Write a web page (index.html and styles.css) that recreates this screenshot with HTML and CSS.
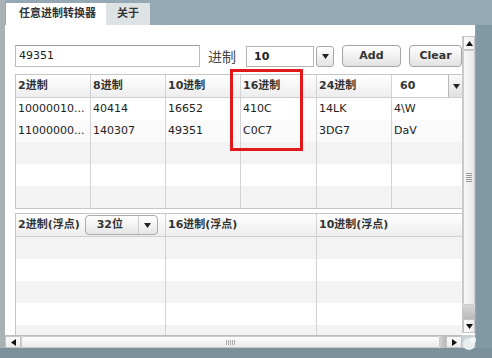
FILE: index.html
```
<!DOCTYPE html>
<html>
<head>
<meta charset="utf-8">
<title>任意进制转换器</title>
<link rel="stylesheet" href="styles.css">
</head>
<body>
<div class="window">

<div class="tabbar">
  <div class="tab tab-on">任意进制转换器</div>
  <div class="tab">关于</div>
</div>

<div class="middle">
  <div class="panel">
    <div class="pane">

      <div class="toolbar">
        <div class="field">49351</div>
        <span class="label">进制</span>
        <div class="combo">
          <div class="combo-box">10</div>
          <div class="combo-btn"><svg width="7" height="5" viewBox="0 0 7 5"><polygon points="0,0 7,0 3.5,5" fill="#222"/></svg></div>
        </div>
        <div class="btn">Add</div>
        <div class="btn btn-clear">Clear</div>
      </div>

      <div class="tbl tbl-int">
        <div class="tr th">
          <div class="td">2进制</div>
          <div class="td">8进制</div>
          <div class="td">10进制</div>
          <div class="td">16进制</div>
          <div class="td">24进制</div>
          <div class="td td-pick">
            <div class="pick-box">60</div>
            <div class="pick-btn"><svg width="7" height="5" viewBox="0 0 7 5"><polygon points="0,0 7,0 3.5,5" fill="#222"/></svg></div>
          </div>
        </div>
        <div class="tr r-white">
          <div class="td">10000010...</div>
          <div class="td">40414</div>
          <div class="td">16652</div>
          <div class="td">410C</div>
          <div class="td">14LK</div>
          <div class="td">4\W</div>
        </div>
        <div class="tr r-faint">
          <div class="td">11000000...</div>
          <div class="td">140307</div>
          <div class="td">49351</div>
          <div class="td">C0C7</div>
          <div class="td">3DG7</div>
          <div class="td">DaV</div>
        </div>
        <div class="tr r-gray"><div class="td"></div><div class="td"></div><div class="td"></div><div class="td"></div><div class="td"></div><div class="td"></div></div>
        <div class="tr r-white"><div class="td"></div><div class="td"></div><div class="td"></div><div class="td"></div><div class="td"></div><div class="td"></div></div>
        <div class="tr r-gray"><div class="td"></div><div class="td"></div><div class="td"></div><div class="td"></div><div class="td"></div><div class="td"></div></div>
      </div>

      <div class="tbl tbl-float">
        <div class="tr th">
          <div class="td td-bits">
            <span>2进制(浮点)</span>
            <div class="bits">
              <span class="bits-val">32位</span>
              <span class="bits-arrow"><svg width="7" height="5" viewBox="0 0 7 5"><polygon points="0,0 7,0 3.5,5" fill="#222"/></svg></span>
            </div>
          </div>
          <div class="td">16进制(浮点)</div>
          <div class="td">10进制(浮点)</div>
        </div>
        <div class="tr r-gray"><div class="td"></div><div class="td"></div><div class="td"></div></div>
        <div class="tr r-white"><div class="td"></div><div class="td"></div><div class="td"></div></div>
        <div class="tr r-gray"><div class="td"></div><div class="td"></div><div class="td"></div></div>
        <div class="tr r-white"><div class="td"></div><div class="td"></div><div class="td"></div></div>
        <div class="tr r-gray"><div class="td"></div><div class="td"></div><div class="td"></div></div>
      </div>

    </div>

    <div class="vscroll">
      <div class="arrow"><svg width="7" height="5" viewBox="0 0 7 5"><polygon points="0,5 7,5 3.5,0" fill="#111"/></svg></div>
      <div class="vthumb"><div class="grip-h"></div></div>
      <div class="vtrack"></div>
      <div class="arrow"><svg width="7" height="5" viewBox="0 0 7 5"><polygon points="0,0 7,0 3.5,5" fill="#111"/></svg></div>
    </div>

    <div class="hscroll">
      <div class="harrow"><svg width="5" height="7" viewBox="0 0 5 7"><polygon points="5,0 5,7 0,3.5" fill="#111"/></svg></div>
      <div class="hthumb"><div class="grip-v"></div></div>
      <div class="htrack"></div>
      <div class="harrow"><svg width="5" height="7" viewBox="0 0 5 7"><polygon points="0,0 0,7 5,3.5" fill="#111"/></svg></div>
    </div>

    <div class="corner">
      <svg width="14" height="15" viewBox="0 0 14 15">
        <circle cx="7" cy="9" r="6" fill="#e9eef0"/>
        <circle cx="11" cy="5" r="3" fill="#f4f6f7"/>
      </svg>
    </div>
  </div>
  <div class="side"></div>
</div>

<div class="bottom"></div>

<div class="mark"></div>
</div>
</body>
</html>
```

FILE: styles.css
```
/* 任意进制转换器 window */

body
{ margin: 0;
  background-color: #8299a4;
  font-family: "DejaVu Sans", "Noto Sans CJK SC", sans-serif;
  font-size: 11px;
  color: #222;
}

div.window
{ position: relative;
  width: 492px;
  height: 358px;
  overflow: hidden;
}

/* Tabs */

div.tabbar
{ display: flex;
  align-items: flex-end;
  height: 25px;
  background-color: #94a9b4;
  border-left: 5px solid #a9b1b5;
}

div.tab
{ height: 22px;
  line-height: 22px;
  padding: 0 11px;
  background-color: #dde2e4;
  font-weight: bold;
  color: #333;
}

div.tab-on
{ width: 100px;
  box-sizing: border-box;
  margin-left: 1px;
  padding: 0 0 0 13px;
  white-space: nowrap;
  background-color: #fff;
}

/* Main panel */

div.middle
{ display: flex;
  height: 323px;
}

div.panel
{ display: grid;
  grid-template-columns: 457px 13px;
  grid-template-rows: 310px 13px;
  border-left: 5px solid #a9b1b5;
  border-right: 1px solid #9aa3a8;
  background-color: #fff;
}

div.side
{ flex: 1;
  background-color: #8199a4;
}

div.bottom
{ height: 10px;
  background-color: #7b919c;
}

div.pane
{ overflow: hidden;
  padding: 20px 0 0 10px;
}

/* Toolbar */

div.toolbar
{ display: flex;
  align-items: center;
  height: 22px;
}

div.toolbar > *
{ flex-shrink: 0;
}

div.field
{ width: 185px;
  height: 22px;
  box-sizing: border-box;
  border: 1px solid #bcbcbc;
  border-top-color: #9c9c9c;
  padding-left: 3px;
  line-height: 20px;
}

span.label
{ margin: 0 10px 0 8px;
  font-size: 14px;
  color: #444;
}

div.combo
{ display: flex;
  gap: 2px;
  height: 21px;
}

div.combo-box
{ width: 68px;
  box-sizing: border-box;
  border: 1px solid #b4b4b4;
  padding-left: 7px;
  line-height: 19px;
  font-weight: bold;
}

div.combo-btn
{ display: flex;
  align-items: center;
  justify-content: center;
  width: 18px;
  box-sizing: border-box;
  border: 1px solid #a8a8a8;
  border-radius: 3px;
  background: linear-gradient(#ffffff, #e4e4e4);
}

div.btn
{ width: 59px;
  height: 22px;
  box-sizing: border-box;
  margin-left: 8px;
  border: 1px solid #a4a4a4;
  border-radius: 4px;
  background: linear-gradient(#ffffff, #e2e2e2);
  text-align: center;
  line-height: 19px;
  font-weight: bold;
  color: #333;
}

div.btn-clear
{ width: 53px;
}

/* Tables */

div.tbl
{ width: max-content;
  border: 1px solid #c6c6c6;
  border-right: none;
}

div.tbl-int
{ margin-top: 7px;
}

div.tbl-float
{ margin-top: 4px;
}

div.tr
{ display: flex;
  height: 22px;
}

div.th
{ height: 22px;
  border-bottom: 1px solid #cfcfcf;
  background: linear-gradient(#ffffff, #ededed);
  font-weight: bold;
  color: #333;
}

div.td
{ box-sizing: border-box;
  border-right: 1px solid #d3d3d3;
  padding-left: 2px;
  line-height: 22px;
  white-space: nowrap;
  overflow: hidden;
}

div.r-white { background-color: #fff; }
div.r-faint { background-color: #fafafa; }
div.r-gray  { background-color: #f3f3f3; }

div.tbl-int div.td:nth-child(1) { width: 75px; }
div.tbl-int div.td:nth-child(2) { width: 75px; }
div.tbl-int div.td:nth-child(3) { width: 75px; }
div.tbl-int div.td:nth-child(4) { width: 76px; }
div.tbl-int div.td:nth-child(5) { width: 75px; }
div.tbl-int div.td:nth-child(6) { width: 80px; }

div.tbl-float div.td:nth-child(1) { width: 150px; }
div.tbl-float div.td:nth-child(2) { width: 151px; }
div.tbl-float div.td:nth-child(3) { width: 160px; }

div.td-pick
{ display: flex;
  padding-left: 0;
}

div.pick-box
{ width: 56px;
  background-color: #fff;
  padding-left: 8px;
  box-sizing: border-box;
}

div.pick-btn
{ display: flex;
  align-items: center;
  justify-content: center;
  width: 15px;
  border-left: 1px solid #b8b8b8;
  background: linear-gradient(#fafafa, #e0e0e0);
}

div.td-bits
{ display: flex;
  align-items: center;
}

div.bits
{ display: flex;
  align-items: center;
  width: 73px;
  height: 20px;
  box-sizing: border-box;
  margin-left: 5px;
  border: 1px solid #ababab;
  border-radius: 4px;
  background: linear-gradient(#ffffff, #e6e6e6);
}

span.bits-val
{ width: 53px;
  padding-left: 11px;
  box-sizing: border-box;
  line-height: 18px;
  border-right: 1px solid #cfcfcf;
}

span.bits-arrow
{ display: flex;
  justify-content: center;
  flex: 1;
}

/* Scrollbars */

div.vscroll
{ display: flex;
  flex-direction: column;
  margin: 11px 0 2px 0;
  border-left: 1px solid #c9c9c9;
  background-color: #eeeeee;
}

div.arrow
{ display: flex;
  align-items: center;
  justify-content: center;
  height: 12px;
  border: 1px solid #c4c4c4;
  background: linear-gradient(to right, #fbfbfb, #ececec);
}

div.vthumb
{ display: flex;
  align-items: center;
  justify-content: center;
  flex: 1;
  border: 1px solid #cbcbcb;
  border-radius: 2px;
  background: linear-gradient(to right, #f9f9f9, #e8e8e8);
}

div.grip-h
{ width: 6px;
  height: 9px;
  background: repeating-linear-gradient(#999 0, #999 1px, transparent 1px, transparent 2px);
}

div.vtrack
{ height: 14px;
  background: linear-gradient(#d6d6d6, #b8b8b8);
}

div.hscroll
{ display: flex;
  border-top: 1px solid #bdbdbd;
  background-color: #eeeeee;
}

div.harrow
{ display: flex;
  align-items: center;
  justify-content: center;
  width: 14px;
  border: 1px solid #c4c4c4;
  background: linear-gradient(#fbfbfb, #ececec);
}

div.hthumb
{ display: flex;
  align-items: center;
  justify-content: center;
  flex: 1;
  border: 1px solid #cbcbcb;
  border-radius: 2px;
  background: linear-gradient(#fdfdfd, #ebebeb);
}

div.grip-v
{ width: 9px;
  height: 5px;
  background: repeating-linear-gradient(to right, #aaa 0, #aaa 1px, transparent 1px, transparent 2px);
}

div.htrack
{ width: 6px;
  background: linear-gradient(to right, #d0d0d0, #b8b8b8);
}

div.corner
{ background-color: #c9d3d8;
}

/* highlight drawn over the 16进制 column */

div.mark
{ position: absolute;
  left: 230px;
  top: 69px;
  width: 73px;
  height: 82px;
  box-sizing: border-box;
  border: 3px solid #e2191b;
}
```
